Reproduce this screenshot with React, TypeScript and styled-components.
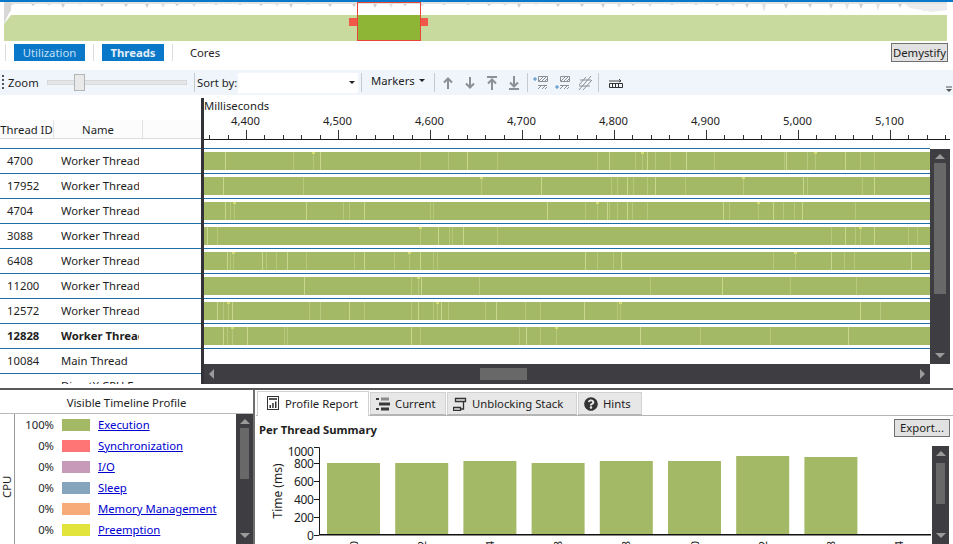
import React from "react";
import styled, { createGlobalStyle } from "styled-components";
import { FaQuestionCircle } from "react-icons/fa";

const GlobalStyle = createGlobalStyle`
  html, body {
    margin: 0;
    padding: 0;
    background: #fff;
  }
  body {
    font-family: "Noto Sans", "Open Sans", sans-serif;
    font-size: 11.3px;
    color: #1e1e1e;
  }
`;

const BAR_GREEN = "#a3b966";

const threads = [
  { id: "4700", name: "Worker Thread", stripes: [225, 293, 313, 320, 420, 448, 467, 497, 597, 609, 635, 642, 647, 655, 670, 686, 714, 784, 786, 807, 815, 845, 860, 874] },
  { id: "17952", name: "Worker Thread", stripes: [223, 303, 481, 541, 611, 617, 627, 633, 647, 655, 685, 743, 803, 807, 862, 874] },
  { id: "4704", name: "Worker Thread", stripes: [225, 230, 234, 306, 343, 349, 364, 430, 433, 547, 585, 597, 607, 609, 617, 627, 632, 647, 723, 729, 758, 773, 783, 794, 802, 855] },
  { id: "3088", name: "Worker Thread", stripes: [207, 217, 420, 438, 449, 452, 463, 497, 831, 845, 855, 860, 874, 908, 917] },
  { id: "6408", name: "Worker Thread", stripes: [227, 230, 233, 262, 266, 276, 287, 306, 354, 364, 394, 409, 420, 433, 437, 585, 597, 613, 621, 773, 795, 831, 844, 854, 911] },
  { id: "11200", name: "Worker Thread", stripes: [304, 411, 418, 421, 479, 650, 722, 790, 856] },
  { id: "12572", name: "Worker Thread", stripes: [217, 223, 228, 232, 309, 320, 349, 364, 411, 418, 433, 437, 441, 448, 485, 496, 525, 540, 584, 617, 620, 860, 880] },
  { id: "12828", name: "Worker Thread", bold: true, stripes: [223, 227, 232, 247, 284, 287, 411, 420, 519, 526, 540, 556, 640, 700, 770, 848] },
];

const legend = [
  { pct: "100%", color: "#a3b966", label: "Execution" },
  { pct: "0%", color: "#ff7575", label: "Synchronization" },
  { pct: "0%", color: "#c69ab8", label: "I/O" },
  { pct: "0%", color: "#85a5bd", label: "Sleep" },
  { pct: "0%", color: "#f7ab78", label: "Memory Management" },
  { pct: "0%", color: "#e2e33b", label: "Preemption" },
];

const summary = [
  { id: "4700", top: 463 },
  { id: "17952", top: 463 },
  { id: "4704", top: 461 },
  { id: "3088", top: 463 },
  { id: "6408", top: 461 },
  { id: "11200", top: 461 },
  { id: "12572", top: 456 },
  { id: "12828", top: 457 },
  { id: "10084", top: 535 },
];

const Page = styled.div`
  width: 953px;
  height: 544px;
  overflow: hidden;
  display: flex;
  flex-direction: column;
  background: #fff;
`;

const OverviewSvg = styled.svg`
  display: block;
  flex: none;
`;

const ViewBar = styled.div`
  height: 28px;
  display: flex;
  align-items: flex-start;
  padding: 2px 5px 0 5px;
  box-sizing: border-box;
  gap: 8px;
`;

const ViewDivider = styled.span`
  width: 1px;
  height: 17px;
  background: #dcdcdc;
`;

const ViewButton = styled.div<{ $on?: boolean; $bold?: boolean; $width: number }>`
  width: ${(p) => p.$width}px;
  height: 17px;
  line-height: 18px;
  text-align: center;
  background: ${(p) => (p.$on ? "#0a78c8" : "transparent")};
  color: ${(p) => (p.$on ? (p.$bold ? "#e4eef7" : "#c4dff3") : "#1e1e1e")};
  font-weight: ${(p) => (p.$bold ? 700 : 400)};
`;

const Demystify = styled.div`
  margin-left: auto;
  margin-top: -1px;
  width: 57px;
  height: 19px;
  box-sizing: border-box;
  border: 1px solid #707070;
  background: #e1e1e1;
  text-align: center;
  line-height: 17px;
`;

const Toolbar = styled.div`
  height: 25px;
  background: #eff5fb;
  display: flex;
  align-items: center;
  position: relative;
`;

const Gripper = styled.span`
  width: 2px;
  height: 15px;
  margin: 0 4px 0 2px;
  background: repeating-linear-gradient(to bottom, #555 0 2px, transparent 2px 4px);
`;

const ZoomLabel = styled.span`
  width: 39px;
  flex: none;
`;

const ZoomTrack = styled.div`
  width: 140px;
  height: 5px;
  margin-right: 7px;
  background: #e4e6e8;
  border: 1px solid #d6d8da;
  box-sizing: border-box;
  position: relative;
`;

const ZoomThumb = styled.div`
  position: absolute;
  left: 26px;
  top: -7px;
  width: 11px;
  height: 17px;
  box-sizing: border-box;
  background: #e9e9e9;
  border: 1px solid #b4b4b4;
`;

const ToolSep = styled.span<{ $left?: number; $right?: number }>`
  width: 1px;
  height: 19px;
  flex: none;
  margin-left: ${(p) => p.$left ?? 0}px;
  margin-right: ${(p) => p.$right ?? 0}px;
  background: #c4cad0;
`;

const SortLabel = styled.span`
  width: 41px;
  margin-left: 2px;
  flex: none;
  white-space: nowrap;
`;

const SortCombo = styled.div`
  width: 120px;
  height: 20px;
  margin-right: 3px;
  background: #fff;
  display: flex;
  align-items: center;
  justify-content: flex-end;
  padding-right: 3px;
  box-sizing: border-box;
`;

const Caret = styled.span`
  width: 0;
  height: 0;
  border-left: 3px solid transparent;
  border-right: 3px solid transparent;
  border-top: 3px solid #222;
`;

const MarkersMenu = styled.div`
  width: 52px;
  display: flex;
  align-items: center;
  gap: 4px;
  margin: -5px 11px 0 9px;
`;

const ToolIcon = styled.svg<{ $flip?: boolean; $flush?: boolean }>`
  width: 16px;
  height: 16px;
  margin-left: ${(p) => (p.$flush ? 0 : 6)}px;
  flex: none;
  transform: ${(p) => (p.$flip ? "scaleY(-1)" : "none")};
`;

const OverflowMark = styled.svg`
  position: absolute;
  right: 0;
  bottom: 2px;
  width: 8px;
  height: 7px;
`;

const Timeline = styled.div`
  margin-top: 1px;
  height: 288px;
  flex: none;
  display: flex;
  overflow: hidden;
`;

const NamesColumn = styled.div`
  width: 201px;
  flex: none;
`;

const NamesHeader = styled.div`
  height: 28px;
  padding-top: 24px;
  border-bottom: 1px solid #1d6fa5;
`;

const HeaderCells = styled.div`
  height: 18px;
  display: flex;
  background: #fcfcfc;
  border-bottom: 1px solid #dcdcdc;
`;

const HeaderCell = styled.div<{ $width: number }>`
  width: ${(p) => p.$width}px;
  box-sizing: border-box;
  border-right: 1px solid #e2e2e2;
  text-align: center;
  line-height: 19px;
  white-space: nowrap;
  overflow: hidden;
`;

const NameRow = styled.div<{ $bold?: boolean }>`
  height: 22px;
  padding-bottom: 2px;
  border-bottom: 1px solid #1d6fa5;
  display: flex;
  align-items: center;
  font-weight: ${(p) => (p.$bold ? 700 : 400)};
  white-space: nowrap;
`;

const IdCell = styled.span`
  width: 54px;
  padding-left: 7px;
  box-sizing: border-box;
  flex: none;
`;

const NameCell = styled.span`
  width: 78px;
  margin-left: 7px;
  overflow: hidden;
  flex: none;
`;

const Divider = styled.div`
  width: 3px;
  flex: none;
  margin-top: 2px;
  background: #333337;
`;

const LanesColumn = styled.div`
  width: 746px;
  flex: none;
  display: flex;
  flex-direction: column;
`;

const RulerBox = styled.div`
  height: 52px;
  width: 726px;
  flex: none;
  border-bottom: 1px solid #1d6fa5;
`;

const Milliseconds = styled.div`
  height: 18px;
  line-height: 20px;
`;

const RulerSvg = styled.svg`
  display: block;
  width: 746px;
  height: 34px;
`;

const LaneBody = styled.div`
  display: flex;
  height: 215px;
  flex: none;
`;

const Lanes = styled.div`
  width: 726px;
  flex: none;
`;

const Lane = styled.div`
  height: 21px;
  padding-top: 3px;
  border-bottom: 1px solid #1d6fa5;
`;

const LaneSvg = styled.svg`
  display: block;
  width: 726px;
  height: 18px;
`;

const VBar = styled.div<{ $width: number }>`
  width: ${(p) => p.$width}px;
  flex: none;
  background: #3e3e42;
  display: flex;
  flex-direction: column;
  align-items: center;
`;

const VThumb = styled.div<{ $top: number; $height: number; $width: number }>`
  width: ${(p) => p.$width}px;
  height: ${(p) => p.$height}px;
  margin-top: ${(p) => p.$top}px;
  background: #686868;
`;

const ArrowUp = styled.span`
  margin-top: 5px;
  border-left: 5px solid transparent;
  border-right: 5px solid transparent;
  border-bottom: 5px solid #9b9b9b;
`;

const ArrowDown = styled.span`
  margin-top: auto;
  margin-bottom: 6px;
  border-left: 5px solid transparent;
  border-right: 5px solid transparent;
  border-top: 5px solid #9b9b9b;
`;

const HBar = styled.div`
  width: 726px;
  height: 20px;
  flex: none;
  background: #3e3e42;
  display: flex;
  align-items: center;
  padding: 0 5px;
  box-sizing: border-box;
`;

const ArrowLeft = styled.span`
  border-top: 5px solid transparent;
  border-bottom: 5px solid transparent;
  border-right: 5px solid #9b9b9b;
`;

const ArrowRight = styled.span`
  margin-left: auto;
  border-top: 5px solid transparent;
  border-bottom: 5px solid transparent;
  border-left: 5px solid #9b9b9b;
`;

const HThumb = styled.div`
  width: 47px;
  height: 12px;
  margin-left: 266px;
  background: #686868;
`;

const Splitter = styled.div`
  margin-top: 4px;
  height: 2px;
  flex: none;
  background: #5a5a5a;
`;

const Bottom = styled.div`
  flex: 1;
  display: flex;
  min-height: 0;
`;

const ProfilePanel = styled.div`
  width: 253px;
  flex: none;
  display: flex;
  flex-direction: column;
`;

const ProfileTitle = styled.div`
  height: 23px;
  line-height: 25px;
  text-align: center;
  border-bottom: 1px solid #b9b9b9;
  flex: none;
`;

const ProfileBody = styled.div`
  flex: 1;
  display: flex;
  min-height: 0;
`;

const CpuLabel = styled.div`
  width: 15px;
  flex: none;
  box-sizing: border-box;
  border-left: 1px solid #9a9a9a;
  writing-mode: vertical-rl;
  transform: rotate(180deg);
  text-align: center;
  line-height: 13px;
  padding-bottom: 16px;
`;

const LegendList = styled.div`
  flex: 1;
`;

const LegendRow = styled.div`
  height: 21px;
  display: flex;
  align-items: center;
`;

const Pct = styled.span`
  width: 39px;
  text-align: right;
  flex: none;
`;

const Swatch = styled.span<{ $color: string }>`
  width: 28px;
  height: 12px;
  margin: 0 8px;
  flex: none;
  background: ${(p) => p.$color};
`;

const LegendLink = styled.a`
  color: #0000d0;
  text-decoration: underline;
  white-space: nowrap;
`;

const PanelSplit = styled.div`
  width: 3px;
  flex: none;
  background: #6e6e6e;
  border-right: 1px solid #fff;
  box-sizing: border-box;
`;

const ReportPanel = styled.div`
  flex: 1;
  min-width: 0;
  display: flex;
  flex-direction: column;
`;

const TabStrip = styled.div`
  height: 26px;
  flex: none;
  display: flex;
  align-items: flex-end;
  padding-left: 1px;
  border-bottom: 1px solid #b4b4b4;
  box-sizing: border-box;
`;

const Tab = styled.div<{ $active?: boolean; $width: number }>`
  width: ${(p) => p.$width}px;
  height: ${(p) => (p.$active ? 25 : 23)}px;
  margin-bottom: ${(p) => (p.$active ? -1 : 0)}px;
  margin-right: 1px;
  padding-bottom: ${(p) => (p.$active ? 2 : 0)}px;
  box-sizing: border-box;
  background: ${(p) => (p.$active ? "#fff" : "#e7e7e7")};
  border: 1px solid ${(p) => (p.$active ? "#d0d0d0" : "#d2d2d2")};
  border-bottom: ${(p) => (p.$active ? "none" : "1px solid #b4b4b4")};
  display: flex;
  align-items: center;
  gap: 5px;
  padding-left: ${(p) => (p.$active ? 8 : 5)}px;
  white-space: nowrap;
`;

const TabIcon = styled.svg`
  width: 14px;
  height: 14px;
  flex: none;
`;

const ReportHead = styled.div`
  height: 30px;
  flex: none;
  display: flex;
  align-items: flex-start;
  padding: 3px 3px 0 3px;
  box-sizing: border-box;
  justify-content: space-between;
`;

const ReportTitle = styled.div`
  font-weight: 700;
  margin-top: 3px;
`;

const ExportButton = styled.div`
  width: 56px;
  height: 18px;
  box-sizing: border-box;
  border: 1px solid #707070;
  background: #e1e1e1;
  text-align: center;
  line-height: 16px;
`;

const ChartRow = styled.div`
  flex: 1;
  min-height: 0;
  display: flex;
`;

const ChartSvg = styled.svg`
  width: 676px;
  height: 98px;
  flex: none;
  display: block;
`;

const Overview = () => {
  const dips: number[] = [];
  for (let x = 12; x < 946; x += 13 + ((x * 7) % 19)) dips.push(x);
  return (
    <OverviewSvg width="953" height="42">
      <rect width="953" height="2" fill="#0a78c8" />
      <rect x="4" y="2" width="943" height="2" fill="#e2e2e2" />
      <polygon points="4,2 11,2 11,10 8,15 4,24" fill="#d8d8d8" />
      {dips.map((x) => (
        <polygon
          key={x}
          points={`${x - 2},4 ${x + 2},4 ${x},${x > 760 ? 8 + (x % 5) : 5 + (x % 4)}`}
          fill={x % 3 === 0 ? "#cfcfcf" : "#e2e2e2"}
        />
      ))}
      <polygon points="905,4 947,4 947,10 932,12 910,8" fill="#ececec" />
      <polygon points="4,41 4,24 11,15 947,15 947,41" fill="#c9da9f" />
      <rect x="358" y="15" width="63" height="26" fill="#8fb536" />
      <rect x="357.5" y="2.5" width="63" height="38" fill="none" stroke="#e8443a" />
      <rect x="349" y="18" width="8" height="8" fill="#f0584a" />
      <rect x="421" y="18" width="7" height="8" fill="#f0584a" />
    </OverviewSvg>
  );
};

const Ruler = () => {
  const ticks: { x: number; major: boolean }[] = [];
  for (let i = 0; i < 41; i++) {
    ticks.push({ x: 5.2 + i * 18.4, major: (i - 2) % 5 === 0 });
  }
  const labels = ["4,400", "4,500", "4,600", "4,700", "4,800", "4,900", "5,000", "5,100"];
  return (
    <RulerSvg>
      {labels.map((l, i) => (
        <text key={l} x={41.5 + i * 92} y={11} textAnchor="middle" fontSize="11.3" fill="#1e1e1e">
          {l}
        </text>
      ))}
      <rect x="0" y="25" width="746" height="1" fill="#1a1a1a" />
      {ticks.map((t) => (
        <rect key={t.x} x={Math.round(t.x)} y={t.major ? 16 : 21} width="1" height={t.major ? 9 : 4} fill="#333" />
      ))}
    </RulerSvg>
  );
};

const Stripes = ({ stripes }: { stripes: number[] }) => (
  <LaneSvg>
    <rect width="726" height="18" fill={BAR_GREEN} />
    {stripes.map((s, i) => (
      <g key={s}>
        <rect x={s - 204} y="0" width="1" height="18" fill={i % 3 === 0 ? "#c8d68e" : "#b5c87b"} />
        {i % 9 === 2 && <rect x={s - 205} y="0" width="3" height="2" fill="#d3dc74" />}
      </g>
    ))}
  </LaneSvg>
);

const ArrowIcon = ({ down, bar }: { down?: boolean; bar?: boolean }) => (
  <ToolIcon viewBox="0 0 16 16" $flip={down}>
    <path d={bar ? "M8 15V5M4 8.5l4-4 4 4" : "M8 14V4M4 7.5l4-4 4 4"} fill="none" stroke="#8b9096" strokeWidth="2" />
    {bar && <rect x="3" y="1" width="10" height="2" fill="#8b9096" />}
  </ToolIcon>
);

const HatchIcon = ({ plus }: { plus?: "top" | "bottom" }) => (
  <ToolIcon viewBox="0 0 16 16">
    <g fill="none" stroke="#8a9096" strokeWidth="1">
      {plus ? (
        <>
          <path d="M5.5 1.5h9v5h-9z" />
          <path d="M6 6l4-4M9 6l4-4M12 6l2-2" />
          <path d="M5 14l4-4M9 14l4-4M12 14l2-2M5 10.5h9" />
        </>
      ) : (
        <>
          <path d="M2 15L14 1M6 15L15 5M2 10L9 2" />
          <path d="M3 5h11M2 11h11" />
        </>
      )}
    </g>
    {plus === "top" && <path d="M0 4h4M2 2v4" stroke="#4f8cc4" strokeWidth="1" />}
    {plus === "bottom" && <path d="M0 12h4M2 10v4" stroke="#4f8cc4" strokeWidth="1" />}
  </ToolIcon>
);

const RulerIcon = () => (
  <ToolIcon viewBox="0 0 16 16" $flush>
    <path d="M1.5 8.5h13v4h-13zM4.5 9v3M7.5 9v3M10.5 9v3" fill="none" stroke="#333" />
    <path d="M1 6h11M11 4l2 2-2 1" fill="none" stroke="#444" />
  </ToolIcon>
);

const ReportIcon = () => (
  <TabIcon viewBox="0 0 14 14">
    <rect x="1.5" y="0.5" width="11" height="13" fill="#fff" stroke="#333" />
    <rect x="3" y="2" width="8" height="2" fill="#555" />
    <rect x="3.5" y="9" width="1.5" height="3" fill="#333" />
    <rect x="6.2" y="7" width="1.5" height="5" fill="#333" />
    <rect x="9" y="5.5" width="1.5" height="6.5" fill="#333" />
  </TabIcon>
);

const CurrentIcon = () => (
  <TabIcon viewBox="0 0 14 14">
    <rect x="0" y="1" width="3" height="2" fill="#3a3a3a" />
    <rect x="5" y="0.5" width="8" height="3" fill="#8b8b8b" />
    <rect x="3" y="5.5" width="11" height="3" fill="#3a3a3a" />
    <rect x="0" y="11" width="3" height="2" fill="#3a3a3a" />
    <rect x="5" y="10.5" width="8" height="3" fill="#3a3a3a" />
  </TabIcon>
);

const UnblockIcon = () => (
  <TabIcon viewBox="0 0 14 14">
    <path d="M2.5 1.5h10v3h-10zM0.5 10.5h7v3h-7zM10.5 4.5v7.5h-3" fill="none" stroke="#333" strokeWidth="1.3" />
  </TabIcon>
);

const Chart = () => (
  <ChartSvg viewBox="256 446 676 98">
    <path d="M314 447.5h5.5V534.5" fill="none" stroke="#1a1a1a" />
    <text x="282" y="491" fontSize="12" fill="#1e1e1e" textAnchor="middle" transform="rotate(-90 282 491)">
      Time (ms)
    </text>
    {[
      ["1000", 456, 447],
      ["800", 467.5, 463],
      ["600", 485.5, 481],
      ["400", 503.5, 499],
      ["200", 521.5, 517],
      ["0", 539.5, 535],
    ].map(([label, y, tick]) => (
      <g key={label as string}>
        <text x="313.5" y={y as number} fontSize="12" fill="#1e1e1e" textAnchor="end" letterSpacing="-0.4">
          {label}
        </text>
        <rect x="314" y={tick as number} width="5" height="1" fill="#1a1a1a" />
      </g>
    ))}
    <rect x="319" y="534" width="612" height="1.5" fill="#111" />
    {summary.map((t, i) => {
      const x = 327 + i * 68.2;
      return (
        <g key={t.id}>
          {t.top < 534 && <rect x={x} y={t.top} width="53" height={534 - t.top} fill={BAR_GREEN} />}
          <text
            x={x + 26.5}
            y={541}
            fontSize="11"
            fill="#222"
            textAnchor="end"
            transform={`rotate(-90 ${x + 26.5} 541) translate(0 4)`}
          >
            {t.id}
          </text>
        </g>
      );
    })}
  </ChartSvg>
);

const App = () => {
  return (
    <Page>
      <GlobalStyle />
      <Overview />

      <ViewBar>
        <ViewDivider />
        <ViewButton $on $width={71}>
          Utilization
        </ViewButton>
        <ViewDivider />
        <ViewButton $on $bold $width={62}>
          Threads
        </ViewButton>
        <ViewDivider />
        <ViewButton $width={48}>Cores</ViewButton>
        <Demystify>Demystify</Demystify>
      </ViewBar>

      <Toolbar>
        <Gripper />
        <ZoomLabel>Zoom</ZoomLabel>
        <ZoomTrack>
          <ZoomThumb />
        </ZoomTrack>
        <ToolSep />
        <SortLabel>Sort by:</SortLabel>
        <SortCombo>
          <Caret />
        </SortCombo>
        <ToolSep />
        <MarkersMenu>
          Markers <Caret />
        </MarkersMenu>
        <ToolSep $right={-1} />
        <ArrowIcon />
        <ArrowIcon down />
        <ArrowIcon bar />
        <ArrowIcon down bar />
        <ToolSep $left={5} $right={-1} />
        <HatchIcon plus="top" />
        <HatchIcon plus="bottom" />
        <HatchIcon />
        <ToolSep $left={5} $right={9} />
        <RulerIcon />
        <OverflowMark viewBox="0 0 8 7">
          <path d="M1 1h6" stroke="#555" />
          <path d="M1 3h6L4 6z" fill="#555" />
        </OverflowMark>
      </Toolbar>

      <Timeline>
        <NamesColumn>
          <NamesHeader>
            <HeaderCells>
              <HeaderCell $width={54}>Thread ID</HeaderCell>
              <HeaderCell $width={89}>Name</HeaderCell>
            </HeaderCells>
          </NamesHeader>
          {threads.map((t) => (
            <NameRow key={t.id} $bold={t.bold}>
              <IdCell>{t.id}</IdCell>
              <NameCell>{t.name}</NameCell>
            </NameRow>
          ))}
          <NameRow>
            <IdCell>10084</IdCell>
            <NameCell>Main Thread</NameCell>
          </NameRow>
          <NameRow>
            <IdCell />
            <NameCell>DirectX CPU E</NameCell>
          </NameRow>
        </NamesColumn>
        <Divider />
        <LanesColumn>
          <RulerBox>
            <Milliseconds>Milliseconds</Milliseconds>
            <Ruler />
          </RulerBox>
          <LaneBody>
            <Lanes>
              {threads.map((t) => (
                <Lane key={t.id}>
                  <Stripes stripes={t.stripes} />
                </Lane>
              ))}
            </Lanes>
            <VBar $width={20}>
              <ArrowUp />
              <VThumb $top={4} $height={131} $width={12} />
              <ArrowDown />
            </VBar>
          </LaneBody>
          <HBar>
            <ArrowLeft />
            <HThumb />
            <ArrowRight />
          </HBar>
        </LanesColumn>
      </Timeline>

      <Splitter />

      <Bottom>
        <ProfilePanel>
          <ProfileTitle>Visible Timeline Profile</ProfileTitle>
          <ProfileBody>
            <CpuLabel>CPU</CpuLabel>
            <LegendList>
              {legend.map((l) => (
                <LegendRow key={l.label}>
                  <Pct>{l.pct}</Pct>
                  <Swatch $color={l.color} />
                  <LegendLink href="#">{l.label}</LegendLink>
                </LegendRow>
              ))}
            </LegendList>
            <VBar $width={17}>
              <ArrowUp />
              <VThumb $top={4} $height={51} $width={9} />
              <ArrowDown />
            </VBar>
          </ProfileBody>
        </ProfilePanel>
        <PanelSplit />
        <ReportPanel>
          <TabStrip>
            <Tab $active $width={112}>
              <ReportIcon />
              Profile Report
            </Tab>
            <Tab $width={76}>
              <CurrentIcon />
              Current
            </Tab>
            <Tab $width={130}>
              <UnblockIcon />
              Unblocking Stack
            </Tab>
            <Tab $width={64}>
              <FaQuestionCircle size={14} color="#333" />
              Hints
            </Tab>
          </TabStrip>
          <ReportHead>
            <ReportTitle>Per Thread Summary</ReportTitle>
            <ExportButton>Export...</ExportButton>
          </ReportHead>
          <ChartRow>
            <Chart />
            <VBar $width={17}>
              <ArrowUp />
              <VThumb $top={7} $height={41} $width={9} />
              <ArrowDown />
            </VBar>
          </ChartRow>
        </ReportPanel>
      </Bottom>
    </Page>
  );
};

export default App;
